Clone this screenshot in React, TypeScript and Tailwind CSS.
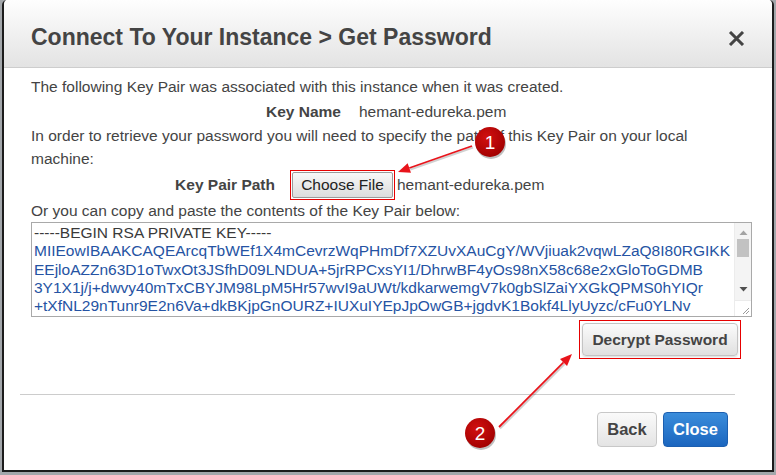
import React from "react";

function Badge({ n, cx, cy }: { n: string; cx: number; cy: number }) {
  return (
    <g>
      <circle cx={cx + 1} cy={cy + 2} r={15} fill="rgba(0,0,0,0.25)" />
      <circle cx={cx} cy={cy} r={15} fill={`url(#badgeGrad)`} />
      <text
        x={cx}
        y={cy + 7}
        textAnchor="middle"
        fontSize="19"
        fill="#ffffff"
        fontFamily="'Liberation Sans', Arial, sans-serif"
      >
        {n}
      </text>
    </g>
  );
}

function Arrow({ x1, y1, x2, y2 }: { x1: number; y1: number; x2: number; y2: number }) {
  const dx = x2 - x1;
  const dy = y2 - y1;
  const len = Math.sqrt(dx * dx + dy * dy);
  const ux = dx / len;
  const uy = dy / len;
  const hl = 12;
  const hw = 5;
  const bx = x2 - ux * hl;
  const by = y2 - uy * hl;
  const p1 = `${bx - uy * hw},${by + ux * hw}`;
  const p2 = `${bx + uy * hw},${by - ux * hw}`;
  return (
    <g>
      <line x1={x1 + 1} y1={y1 + 1.5} x2={bx + 1} y2={by + 1.5} stroke="rgba(0,0,0,0.18)" strokeWidth={2} />
      <line x1={x1} y1={y1} x2={bx} y2={by} stroke="#e8141b" strokeWidth={1.8} />
      <polygon points={`${x2},${y2} ${p1} ${p2}`} fill="#e8141b" />
    </g>
  );
}

export default function App() {
  const keyLines = [
    "-----BEGIN RSA PRIVATE KEY-----",
    "MIIEowIBAAKCAQEArcqTbWEf1X4mCevrzWqPHmDf7XZUvXAuCgY/WVjiuak2vqwLZaQ8I80RGIKK",
    "EEjloAZZn63D1oTwxOt3JSfhD09LNDUA+5jrRPCxsYI1/DhrwBF4yOs98nX58c68e2xGloToGDMB",
    "3Y1X1j/j+dwvy40mTxCBYJM98LpM5Hr57wvI9aUWt/kdkarwemgV7k0gbSlZaiYXGkQPMS0hYIQr",
    "+tXfNL29nTunr9E2n6Va+dkBKjpGnOURZ+IUXuIYEpJpOwGB+jgdvK1Bokf4LlyUyzc/cFu0YLNv",
  ];
  return (
    <div className="relative w-[776px] h-[475px] overflow-hidden bg-[#a3a7ab] pl-[2px] font-['Liberation_Sans',Arial,sans-serif]">
      <div className="flex flex-col w-[772px] h-[472px] bg-white border-x-2 border-b-2 border-[#1c1c1c] rounded-t-[5px] overflow-hidden">
        {/* header */}
        <div className="flex justify-between h-[68px] shrink-0 border-b border-[#cdcdcd] bg-gradient-to-b from-[#fefefe] to-[#e3e3e3] pl-[27px] pr-[27px] pt-[23px]">
          <div className="text-[23px] leading-[28px] font-bold text-[#444444]">
            Connect To Your Instance &gt; Get Password
          </div>
          <svg width="17" height="15" viewBox="0 0 17 15" className="mt-[8px]">
            <path d="M2 1 L15 14 M15 1 L2 14" stroke="#444444" strokeWidth="3" strokeLinecap="butt" />
          </svg>
        </div>

        {/* body */}
        <div className="flex flex-col pl-[27px] pr-[20px] pt-[6px] text-[15.5px] text-[#444444]">
          <div className="leading-[25px]">
            The following Key Pair was associated with this instance when it was created.
          </div>
          <div className="flex leading-[25px]">
            <div className="w-[310px] text-right font-bold">Key Name</div>
            <div className="ml-[18px]">hemant-edureka.pem</div>
          </div>
          <div className="leading-[23px] w-[720px]">
            In order to retrieve your password you will need to specify the path of this Key Pair on your local
            machine:
          </div>
          <div className="flex items-center h-[29px]">
            <div className="w-[244px] text-right font-bold">Key Pair Path</div>
            <div className="ml-[15px] border border-[#e60000] p-[1px]">
              <div className="h-[26px] w-[101px] flex items-center justify-center rounded-[2px] border border-[#9a9a9a] bg-gradient-to-b from-[#f8f8f8] to-[#dcdcdc] text-[#222222] text-[15.5px]">
                Choose File
              </div>
            </div>
            <div className="ml-[2px]">hemant-edureka.pem</div>
          </div>
          <div className="leading-[23px]">Or you can copy and paste the contents of the Key Pair below:</div>

          {/* textarea */}
          <div className="relative h-[95px] w-[721px] border border-[#a9a9a9] overflow-hidden">
            <div className="pl-[2px] pt-[1px] whitespace-pre leading-[18.3px] text-[15.5px]">
              {keyLines.map((l, i) => (
                <div key={i} className={i === 0 ? "text-[#3a3a3a]" : "text-[#2553a3]"}>
                  {l}
                </div>
              ))}
            </div>
            <div className="absolute right-0 top-0 w-[17px] h-full bg-[#f4f4f4] border-l border-[#ececec]">
              <svg width="17" height="95" viewBox="0 0 17 95">
                <polygon points="4.5,12 12.5,12 8.5,7.5" fill="#a3a3a3" />
                <rect x="2" y="16" width="12" height="18" fill="#c2c2c2" />
                <polygon points="4.5,64 12.5,64 8.5,68.5" fill="#505050" />
                <line x1="0" y1="78" x2="17" y2="78" stroke="#e2e2e2" />
                <rect x="0" y="78" width="17" height="17" fill="#ffffff" />
                <path d="M8 91 L14 85 M11 91 L14 88" stroke="#9a9a9a" strokeWidth="1" />
              </svg>
            </div>
          </div>

          {/* decrypt */}
          <div className="flex justify-end mt-[3px] pr-[11px]">
            <div className="border border-[#e60000] p-[2px]">
              <div className="h-[33px] w-[156px] flex items-center justify-center rounded-[4px] border border-[#c4c4c4] bg-gradient-to-b from-[#fbfbfb] to-[#e0e0e0] shadow-[0_1px_2px_rgba(0,0,0,0.15)] font-bold text-[#444444] text-[15.5px]">
                Decrypt Password
              </div>
            </div>
          </div>
        </div>

        {/* separator */}
        <div className="mt-[35px] ml-[16px] w-[715px] h-px bg-[#cccccc]" />

        {/* footer */}
        <div className="flex justify-end gap-[6px] mt-[17px] pr-[44px]">
          <div className="h-[35px] w-[60px] flex items-center justify-center rounded-[4px] border border-[#c8c8c8] bg-gradient-to-b from-[#fafafa] to-[#e4e4e4] font-bold text-[16.5px] text-[#444444]">
            Back
          </div>
          <div className="h-[35px] w-[65px] flex items-center justify-center rounded-[4px] border border-[#1c5fb0] bg-gradient-to-b from-[#3b8ddb] to-[#1b66bf] font-bold text-[16.5px] text-white">
            Close
          </div>
        </div>
      </div>

      {/* annotations overlay */}
      <svg className="absolute left-0 top-0 pointer-events-none" width="776" height="475" viewBox="0 0 776 475">
        <defs>
          <radialGradient id="badgeGrad" cx="0.4" cy="0.35" r="0.7">
            <stop offset="0" stopColor="#d21010" />
            <stop offset="1" stopColor="#a00000" />
          </radialGradient>
        </defs>
        <Arrow x1={472} y1={146} x2={398} y2={172} />
        <Arrow x1={499} y1={427} x2={572} y2={354} />
        <Badge n="1" cx={490} cy={142} />
        <Badge n="2" cx={480} cy={433} />
      </svg>
    </div>
  );
}
